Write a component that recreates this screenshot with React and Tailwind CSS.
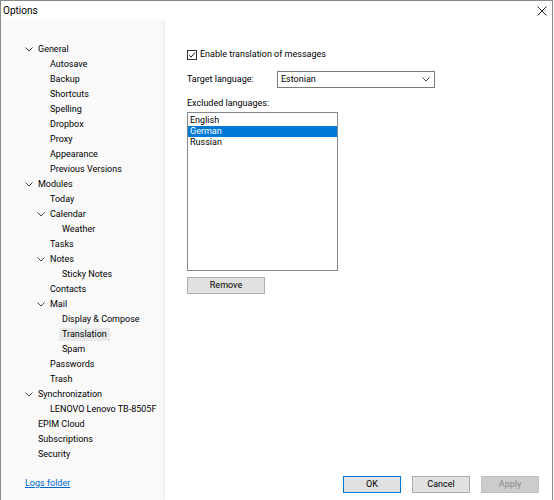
import React from 'react';

const font = { fontFamily: 'Roboto, "Liberation Sans", Arial, sans-serif' };

const Chevron = () => (
  <svg width="8" height="5" viewBox="0 0 8 5" fill="none" stroke="#444" strokeWidth="1">
    <path d="M0.5 0.5 L4 4 L7.5 0.5" />
  </svg>
);

// [label, level, hasChevron, selected]
const tree = [
  ['General', 0, true],
  ['Autosave', 1],
  ['Backup', 1],
  ['Shortcuts', 1],
  ['Spelling', 1],
  ['Dropbox', 1],
  ['Proxy', 1],
  ['Appearance', 1],
  ['Previous Versions', 1],
  ['Modules', 0, true],
  ['Today', 1],
  ['Calendar', 1, true],
  ['Weather', 2],
  ['Tasks', 1],
  ['Notes', 1, true],
  ['Sticky Notes', 2],
  ['Contacts', 1],
  ['Mail', 1, true],
  ['Display & Compose', 2],
  ['Translation', 2, false, true],
  ['Spam', 2],
  ['Passwords', 1],
  ['Trash', 1],
  ['Synchronization', 0, true],
  ['LENOVO Lenovo TB-8505F', 1],
  ['EPIM Cloud', 0],
  ['Subscriptions', 0],
  ['Security', 0],
];

const indents = ['pl-[37px]', 'pl-[49px]', 'pl-[61px]'];
const chevronIndents = ['pl-[24px]', 'pl-[36px]', 'pl-[48px]'];

const TreeRow = ({ label, level, chevron, selected }) => (
  <div className={`h-[15px] flex items-center ${chevron ? chevronIndents[level] : indents[level]}`}>
    {chevron && (
      <span className="w-[13px] flex items-center">
        <Chevron />
      </span>
    )}
    <span className={`leading-[13px] ${selected ? 'bg-[#e8e8e8] px-[3px] -ml-[3px]' : ''}`}>{label}</span>
  </div>
);

const Button = ({ children, className = '' }) => (
  <div className={`h-[17px] flex items-center justify-center border text-[9px] ${className}`}>{children}</div>
);

export default function App() {
  return (
    <div className="w-[554px] h-[500px] bg-white overflow-hidden text-black text-[9px]" style={font}>
      <div className="w-[553px] h-[500px] border-l border-t border-r border-[#8a8a8a] flex flex-col">
        <div className="h-[19px] flex items-center justify-between pl-[2px] pr-[5px] bg-white">
          <span className="text-[10px]">Options</span>
          <svg width="10" height="10" viewBox="0 0 10 10" stroke="#222" strokeWidth="1">
            <path d="M0.5 0.5 L9.5 9.5 M9.5 0.5 L0.5 9.5" />
          </svg>
        </div>
        <div className="flex flex-1">
          <div className="w-[163px] bg-[#f9f9f9] border-r border-[#ececec] shadow-[1px_0_2px_rgba(0,0,0,0.05)] pt-[22px] flex flex-col">
            {tree.map(([label, level, chevron, selected]) => (
              <TreeRow key={label} label={label} level={level} chevron={chevron} selected={selected} />
            ))}
            <div className="h-[15px] mt-[14px] pl-[24px] flex items-center">
              <span className="text-[#0066cc] underline">Logs folder</span>
            </div>
          </div>
          <div className="flex-1 flex flex-col pl-[23px] pt-[29px]">
            <div className="h-[12px] flex items-center gap-[3px]">
              <div className="w-[10px] h-[10px] border border-[#333] bg-white flex items-center justify-center">
                <svg width="8" height="8" viewBox="0 0 8 8" fill="none" stroke="#222" strokeWidth="1">
                  <path d="M1 4 L3 6.2 L7 1.3" />
                </svg>
              </div>
              <span>Enable translation of messages</span>
            </div>
            <div className="mt-[10px] flex items-center h-[17px]">
              <span className="w-[90px]">Target language:</span>
              <div className="w-[158px] h-[17px] border border-[#7a7a7a] bg-white flex items-center justify-between pl-[3px] pr-[4px]">
                <span>Estonian</span>
                <svg width="8" height="5" viewBox="0 0 8 5" fill="none" stroke="#444" strokeWidth="1">
                  <path d="M0.5 0.5 L4 4 L7.5 0.5" />
                </svg>
              </div>
            </div>
            <div className="mt-[10px] h-[12px] flex items-center">Excluded languages:</div>
            <div className="mt-[2px] w-[151px] h-[159px] border border-[#828790] bg-white pt-[2px]">
              <div className="h-[11px] flex items-center pl-[2px]">English</div>
              <div className="h-[11px] flex items-center pl-[2px] bg-[#0078d7] text-white">German</div>
              <div className="h-[11px] flex items-center pl-[2px]">Russian</div>
            </div>
            <Button className="mt-[6px] w-[78px] bg-[#e1e1e1] border-[#adadad]">Remove</Button>
            <div className="flex-1" />
            <div className="flex justify-end gap-[11px] pr-[13px] pb-[7px]">
              <Button className="w-[58px] bg-[#e1e1e1] border-[#0078d7]">OK</Button>
              <Button className="w-[58px] bg-[#e1e1e1] border-[#adadad]">Cancel</Button>
              <Button className="w-[58px] bg-[#cccccc] border-[#bfbfbf] text-[#8a8a8a]">Apply</Button>
            </div>
          </div>
        </div>
      </div>
    </div>
  );
}
